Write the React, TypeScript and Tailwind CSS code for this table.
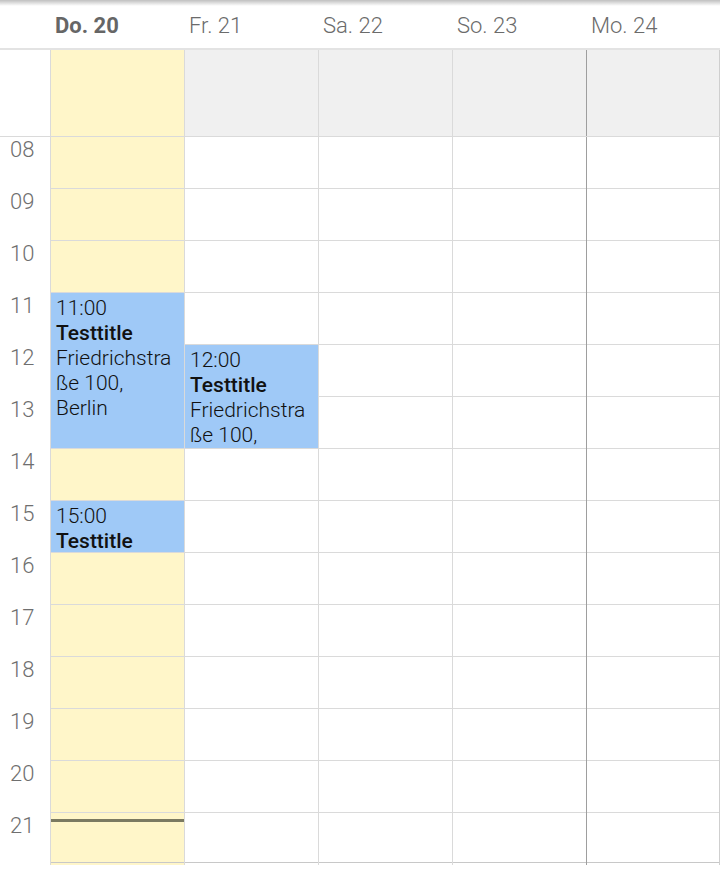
import { ReactNode } from "react";

interface Day {
  label: string;
  today?: boolean;
}

interface CalEvent {
  day: number;
  start: number;
  hours: number;
  time: string;
  title: string;
  place?: string;
}

const days: Day[] = [
  { label: "Do. 20", today: true },
  { label: "Fr. 21" },
  { label: "Sa. 22" },
  { label: "So. 23" },
  { label: "Mo. 24" },
];

const hours = ["08", "09", "10", "11", "12", "13", "14", "15", "16", "17", "18", "19", "20", "21"];

const events: CalEvent[] = [
  { day: 0, start: 11, hours: 3, time: "11:00", title: "Testtitle", place: "Friedrichstraße 100, Berlin" },
  { day: 1, start: 12, hours: 2, time: "12:00", title: "Testtitle", place: "Friedrichstraße 100, Berlin" },
  { day: 0, start: 15, hours: 1, time: "15:00", title: "Testtitle" },
];

function dayBorder(index: number) {
  return index === 4 ? "border-l border-l-[#9e9e9e] border-r border-r-[#cfcfcf]" : "border-l border-[#dadada]";
}

function EventBlock({ event }: { event: CalEvent }) {
  return (
    <div
      className="absolute left-0 right-0 overflow-hidden bg-[#9fc9f7] px-[5px] pt-[3px] text-[21px] font-light leading-[25px] text-[#111] break-words"
      style={{ top: (event.start - 8) * 52, height: event.hours * 52 - 1 }}
    >
      <div>{event.time}</div>
      <div className="font-medium">{event.title}</div>
      {event.place && <div>{event.place}</div>}
    </div>
  );
}

function Row({ children }: { children: ReactNode }) {
  return <div className="grid grid-cols-[50px_repeat(5,134px)]">{children}</div>;
}

export default function App() {
  return (
    <div className="relative h-[876px] w-[720px] overflow-hidden bg-white font-['Roboto',sans-serif]">
      <div className="pointer-events-none absolute inset-x-0 top-0 h-[6px] bg-gradient-to-b from-black/25 to-transparent" />

      {/* day header */}
      <div className="border-b-2 border-[#e3e3e3]">
        <Row>
          <div />
          {days.map((day) => (
            <div
              key={day.label}
              className={
                "h-[48px] pl-[5px] pt-[12px] text-[22px] leading-[28px] " +
                (day.today ? "text-[21px] font-bold text-[#666]" : "font-light text-[#6b6b6b]")
              }
            >
              {day.label}
            </div>
          ))}
        </Row>
      </div>

      {/* all day row */}
      <div className="border-b border-[#dadada]">
        <Row>
          <div className="h-[86px]" />
          {days.map((day, i) => (
            <div
              key={day.label}
              className={"h-[86px] " + dayBorder(i) + (day.today ? " bg-[#fff6c9]" : " bg-[#f0f0f0]")}
            />
          ))}
        </Row>
      </div>

      {/* hour grid */}
      <Row>
        <div>
          {hours.map((h) => (
            <div key={h} className="h-[52px] pl-[10px] pt-[3px] text-[22px] font-light leading-[20px] text-[#6f6f6f]">
              {h}
            </div>
          ))}
        </div>
        {days.map((day, i) => (
          <div key={day.label} className={"relative " + dayBorder(i) + (day.today ? " bg-[#fff6c9]" : "")}>
            {hours.map((h, j) => (
              <div
                key={h}
                className={
                  "border-b " +
                  (j === hours.length - 1 ? "h-[50px] border-[#c8c8c8]" : "h-[52px] border-[#dadada]")
                }
              />
            ))}
            {events
              .filter((e) => e.day === i)
              .map((e) => (
                <EventBlock key={e.time} event={e} />
              ))}
            {day.today && <div className="absolute left-0 right-0 top-[682px] h-[3px] bg-[#7b7a61]" />}
          </div>
        ))}
      </Row>
    </div>
  );
}
